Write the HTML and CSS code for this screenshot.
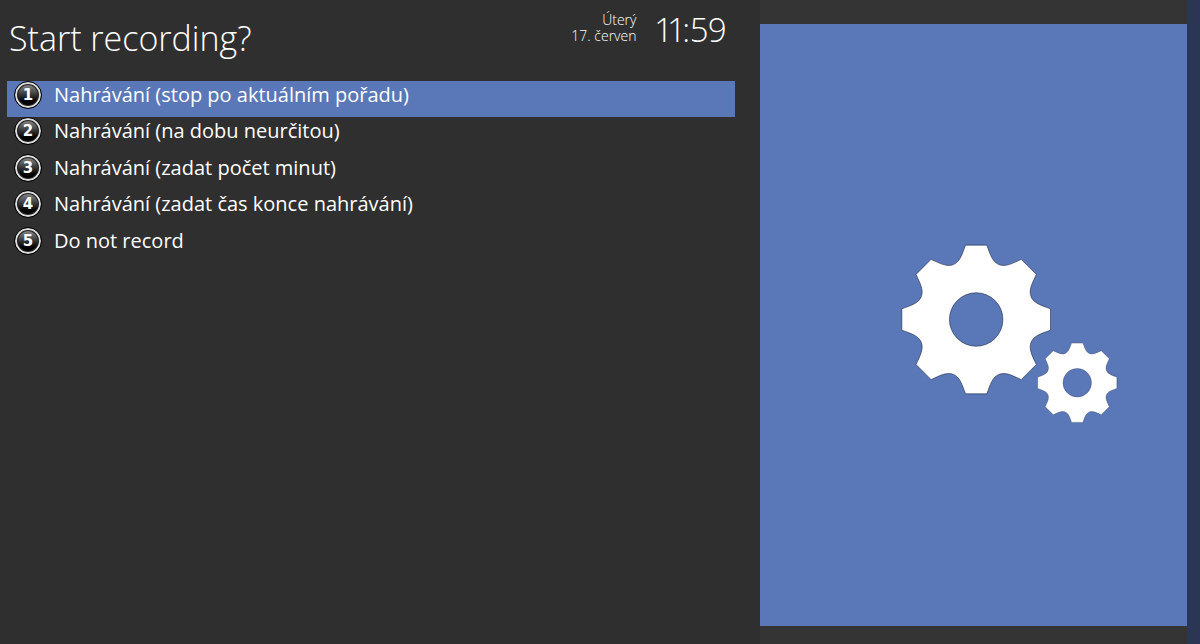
FILE: index.html
```
<!DOCTYPE html>
<html lang="cs">
<head>
    <meta charset="UTF-8">
    <meta name="viewport" content="width=device-width, initial-scale=1.0">
    <title>Start recording?</title>
    <link rel="stylesheet" href="styles.css">
</head>
<body>
    <div class="screen">
        <main class="dialog">
            <header class="header">
                <h1 class="title">Start recording?</h1>
                <div class="date">
                    <div>Úterý</div>
                    <div>17. červen</div>
                </div>
                <time class="clock" datetime="11:59">11:59</time>
            </header>

            <!-- Menu -->
            <ul class="menu">
                <li><button class="item selected" type="button"><span class="number">1</span>Nahrávání (stop po aktuálním pořadu)</button></li>
                <li><button class="item" type="button"><span class="number">2</span>Nahrávání (na dobu neurčitou)</button></li>
                <li><button class="item" type="button"><span class="number">3</span>Nahrávání (zadat počet minut)</button></li>
                <li><button class="item" type="button"><span class="number">4</span>Nahrávání (zadat čas konce nahrávání)</button></li>
                <li><button class="item" type="button"><span class="number">5</span>Do not record</button></li>
            </ul>
        </main>

        <!-- Gears -->
        <aside class="side">
            <svg class="gears" viewBox="0 0 427 600" aria-hidden="true">
                <defs>
                    <path id="gear" fill-rule="evenodd" d="M10.7,-74.3 C14,-65 16.2,-57.6 22.7,-54.9 C29.2,-52.2 36,-55.9 45,-60.1 L60.1,-45 C55.9,-36 52.2,-29.2 54.9,-22.7 C57.6,-16.2 65,-14 74.3,-10.7
                        L74.3,10.7 C65,14 57.6,16.2 54.9,22.7 C52.2,29.2 55.9,36 60.1,45 L45,60.1 C36,55.9 29.2,52.2 22.7,54.9 C16.2,57.6 14,65 10.7,74.3
                        L-10.7,74.3 C-14,65 -16.2,57.6 -22.7,54.9 C-29.2,52.2 -36,55.9 -45,60.1 L-60.1,45 C-55.9,36 -52.2,29.2 -54.9,22.7 C-57.6,16.2 -65,14 -74.3,10.7
                        L-74.3,-10.7 C-65,-14 -57.6,-16.2 -54.9,-22.7 C-52.2,-29.2 -55.9,-36 -60.1,-45 L-45,-60.1 C-36,-55.9 -29.2,-52.2 -22.7,-54.9 C-16.2,-57.6 -14,-65 -10.7,-74.3 Z
                        M26.7,0 A26.7,26.7 0 1 0 -26.7,0 A26.7,26.7 0 1 0 26.7,0 Z"/>
                </defs>
                <use href="#gear" transform="translate(216 294.5)"/>
                <use href="#gear" transform="translate(317 357.7) scale(0.533)"/>
            </svg>
        </aside>
        <div class="edge"></div>
    </div>
</body>
</html>
```
FILE: styles.css
```
* {
    box-sizing: border-box;
}
body {
    margin: 0;
    background-color: #2f2f2f;
    color: white;
    font-family: "Open Sans", "Noto Sans", sans-serif;
}
.screen {
    display: grid;
    grid-template-columns: 16fr 9fr 13px;
    min-height: 100vh;
}
.dialog {
    padding: 8px 25px 0 7px;
}
.header {
    display: flex;
    align-items: flex-start;
    height: 73px;
    padding: 0 8px 0 2px;
}
.title {
    margin: 0 auto 0 0;
    font-size: 34px;
    font-weight: 300;
    line-height: 60px;
}
.date {
    margin-top: 4px;
    margin-right: 20px;
    font-size: 14px;
    font-weight: 300;
    line-height: 16px;
    text-align: right;
}
.clock {
    font-size: 33px;
    font-weight: 300;
    line-height: 44px;
    font-variant-numeric: proportional-nums;
}
.menu {
    display: grid;
    grid-template-rows: repeat(5, 1fr);
    height: 182px;
    list-style: none;
    margin: 0;
    padding: 0;
}
.item {
    display: flex;
    align-items: flex-start;
    gap: 12px;
    width: 100%;
    height: 100%;
    padding: 0 0 0 7px;
    border: none;
    background: none;
    color: white;
    font-family: inherit;
    font-size: 20px;
    line-height: 28px;
    text-align: left;
    cursor: pointer;
}
.item.selected {
    background-color: #5a78b8;
}
.number {
    width: 28px;
    height: 28px;
    border: 1px solid black;
    border-radius: 50%;
    background: linear-gradient(#888 10%, #333 50%, #000 75%);
    box-shadow: inset 0 0 0 2px #ddd, inset 0 0 0 3px #222;
    font-family: "DejaVu Sans", sans-serif;
    font-size: 15px;
    font-weight: bold;
    line-height: 26px;
    text-align: center;
}
.side {
    display: flex;
    padding: 24px 0 18px;
    background-color: #343434;
}
.gears {
    flex: 1;
    width: 100%;
    background-color: #5a78b8;
    fill: white;
    stroke: #1b2744;
    stroke-width: 0.6;
}
.edge {
    background-color: #2b3654;
}
```
